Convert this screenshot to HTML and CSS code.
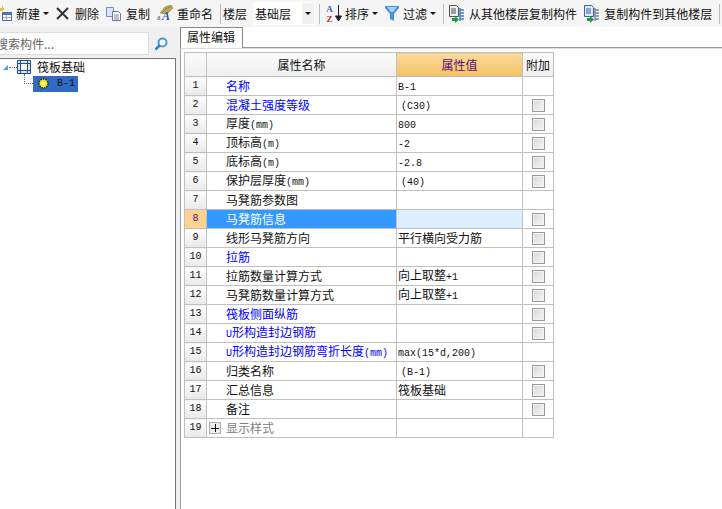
FILE: index.html
```html
<!DOCTYPE html>
<html>
  <head>
    <title>属性编辑</title>
    <link rel="stylesheet" href="styles.css">
  </head>
  <body>
    <div class="toolbar">
      <svg class="ic ic_new" width="12" height="16" viewBox="0 0 12 16">
        <path d="M0 2h2V0h1v2h1v2H3v1H0z" fill="#e8c040"/>
        <rect x="2.5" y="6.5" width="9" height="8" fill="#fff" stroke="#4a6fa8"/>
        <path d="M3 7h8v2H3z" fill="#4a7ac0"/>
        <path d="M3 11.500h8M6.500 9v5" stroke="#9ab"/>
      </svg>
      <span class="tb_text t_new">新建</span><i class="caret"></i>
      <svg class="ic ic_del" width="13" height="13" viewBox="0 0 13 13">
        <path d="M1 1l11 11M12 1L1 12" stroke="#333" stroke-width="2"/>
      </svg>
      <span class="tb_text t_del">删除</span>
      <svg class="ic ic_copy" width="16" height="14" viewBox="0 0 16 14">
        <path d="M.5.500h7v9h-7z" fill="#dce8f8" stroke="#6a8cc0"/>
        <path d="M6.500 4.500h6l2 2v7h-8z" fill="#fff" stroke="#6a7a90"/>
        <path d="M8 8h5M8 10h5M8 12h5" stroke="#7a8aa0"/>
      </svg>
      <span class="tb_text t_copy">复制</span>
      <svg class="ic ic_ren" width="16" height="18" viewBox="0 0 16 18">
        <path d="M3 8l5-6 6-2 2 3-6 6z" fill="#c8a850" stroke="#8a7a40" stroke-width=".6"/>
        <path d="M5 8l5-5 4-1" stroke="#5a9a50" fill="none"/>
        <text x="0" y="15" class="ren_a">a</text>
        <text x="5" y="15" class="ren_b">A</text>
      </svg>
      <span class="tb_text t_ren">重命名</span>
      <i class="sep sep_a"></i>
      <span class="tb_text t_floor">楼层</span>
      <div class="combo">
        <span class="tb_text">基础层</span>
        <div class="combo_btn"><i class="caret"></i></div>
      </div>
      <i class="sep sep_b"></i>
      <div class="ic_sort">
        <span class="az"><b class="az_a">A</b><b class="az_z">Z</b></span>
        <svg width="7" height="17" viewBox="0 0 7 17"><path d="M3.500 0v15M.5 11l3 5 3-5z" stroke="#222" fill="#222"/></svg>
      </div>
      <span class="tb_text t_sort">排序</span><i class="caret"></i>
      <svg class="ic ic_filter" width="14" height="15" viewBox="0 0 14 15">
        <path d="M0 0h14v2L9 8v7l-4-2V8L0 2z" fill="#4a90e0"/>
        <path d="M2 1h10L8 6H6z" fill="#a8d0f4"/>
      </svg>
      <span class="tb_text t_filter">过滤</span><i class="caret"></i>
      <i class="sep sep_c"></i>
      <svg class="ic ic_floor" width="16" height="18" viewBox="0 0 16 18">
        <path d="M.5.500h7l2 2v9h-9z" fill="#eee" stroke="#555"/>
        <path d="M2 4h5M2 6h5M2 8h5" stroke="#555"/>
        <path d="M3 13h3v-2l4 3.500-4 3.500v-2H3z" fill="#1f9a3a"/>
        <path d="M11 5h4M11 8h4M11 11h4M11 14h4M11 3v13" stroke="#3f7cc8" stroke-width="1.500"/>
      </svg>
      <span class="tb_text t_long">从其他楼层复制构件</span>
      <svg class="ic ic_floor2" width="16" height="18" viewBox="0 0 16 18">
        <path d="M.5.500h7l2 2v9h-9z" fill="#dfe8f4" stroke="#3a62a0"/>
        <path d="M2 4h5M2 6h5M2 8h5" stroke="#3a62a0"/>
        <path d="M3 13h3v-2l4 3.500-4 3.500v-2H3z" fill="#1f9a3a"/>
        <path d="M11 5h4M11 8h4M11 11h4M11 14h4M11 3v13" stroke="#7a8796" stroke-width="1.500"/>
      </svg>
      <span class="tb_text t_long">复制构件到其他楼层</span>
      <i class="sep sep_d"></i>
    </div>

    <div class="main">
      <div class="side">
        <div class="search_row">
          <div class="search_box"><span class="search_text">搜索构件...</span></div>
          <svg class="search_ic" width="14" height="14" viewBox="0 0 14 14">
            <circle cx="8.500" cy="5.500" r="4" fill="#fff" stroke="#4a9ad8" stroke-width="2"/>
            <path d="M5.500 8.500L1.500 12.500" stroke="#2f80c8" stroke-width="2.500"/>
          </svg>
        </div>
        <div class="tree">
          <div class="node">
            <i class="tri"></i><i class="dots"></i>
            <svg class="node_ic" width="14" height="14" viewBox="0 0 14 14">
              <path d="M.5.500h13v13H.5z" fill="#dbe6f4" stroke="#1f4f90"/>
              <path d="M3.500 .5v13M10.500 .5v13M.5 3.500h13M.5 10.500h13" stroke="#1f4f90"/>
              <path d="M4 4h6v6H4z" fill="#fff"/>
            </svg>
            <span>筏板基础</span>
          </div>
          <div class="node child">
            <i class="elbow"></i>
            <div class="sel">
              <svg width="11" height="11" viewBox="0 0 11 11">
                <circle cx="5.500" cy="5.500" r="4.500" fill="#f8f020" stroke="#222" stroke-width="1.500" stroke-dasharray="1.500 1"/>
                <circle cx="5.500" cy="5.500" r="1.500" fill="#fff"/>
              </svg>
              <span class="en sel_text">B-1</span>
            </div>
          </div>
        </div>
      </div>

      <div class="content">
        <div class="tabs"><div class="tab">属性编辑</div></div>
        <div class="pane">
          <table class="props">
            <colgroup><col class="c_no"><col class="c_name"><col class="c_val"><col class="c_add"></colgroup>
            <tr class="head">
              <th></th><th>属性名称</th><th class="val_head">属性值</th><th>附加</th>
            </tr>
            <tr><td class="no">1</td><td class="name link">名称</td><td class="val"><span class="en">B-1</span></td><td></td></tr>
            <tr><td class="no">2</td><td class="name link">混凝土强度等级</td><td class="val"><span class="en pad">(C30)</span></td><td class="add"><i class="chk"></i></td></tr>
            <tr><td class="no">3</td><td class="name">厚度<span class="en">(mm)</span></td><td class="val"><span class="en">800</span></td><td class="add"><i class="chk"></i></td></tr>
            <tr><td class="no">4</td><td class="name">顶标高<span class="en">(m)</span></td><td class="val"><span class="en">-2</span></td><td class="add"><i class="chk"></i></td></tr>
            <tr><td class="no">5</td><td class="name">底标高<span class="en">(m)</span></td><td class="val"><span class="en">-2.8</span></td><td class="add"><i class="chk"></i></td></tr>
            <tr><td class="no">6</td><td class="name">保护层厚度<span class="en">(mm)</span></td><td class="val"><span class="en pad">(40)</span></td><td class="add"><i class="chk"></i></td></tr>
            <tr><td class="no">7</td><td class="name">马凳筋参数图</td><td class="val"></td><td></td></tr>
            <tr class="current"><td class="no">8</td><td class="name">马凳筋信息</td><td class="val"></td><td class="add"><i class="chk"></i></td></tr>
            <tr><td class="no">9</td><td class="name">线形马凳筋方向</td><td class="val">平行横向受力筋</td><td class="add"><i class="chk"></i></td></tr>
            <tr><td class="no">10</td><td class="name link">拉筋</td><td class="val"></td><td class="add"><i class="chk"></i></td></tr>
            <tr><td class="no">11</td><td class="name">拉筋数量计算方式</td><td class="val">向上取整<span class="en">+1</span></td><td class="add"><i class="chk"></i></td></tr>
            <tr><td class="no">12</td><td class="name">马凳筋数量计算方式</td><td class="val">向上取整<span class="en">+1</span></td><td class="add"><i class="chk"></i></td></tr>
            <tr><td class="no">13</td><td class="name link">筏板侧面纵筋</td><td class="val"></td><td class="add"><i class="chk"></i></td></tr>
            <tr><td class="no">14</td><td class="name link"><span class="en">U</span>形构造封边钢筋</td><td class="val"></td><td class="add"><i class="chk"></i></td></tr>
            <tr><td class="no">15</td><td class="name link"><span class="en">U</span>形构造封边钢筋弯折长度<span class="en">(mm)</span></td><td class="val"><span class="en">max(15*d,200)</span></td><td></td></tr>
            <tr><td class="no">16</td><td class="name">归类名称</td><td class="val"><span class="en pad">(B-1)</span></td><td class="add"><i class="chk"></i></td></tr>
            <tr><td class="no">17</td><td class="name">汇总信息</td><td class="val">筏板基础</td><td class="add"><i class="chk"></i></td></tr>
            <tr><td class="no">18</td><td class="name">备注</td><td class="val"></td><td class="add"><i class="chk"></i></td></tr>
            <tr><td class="no">19</td><td class="name muted"><span class="plus"></span>显示样式</td><td class="val"></td><td></td></tr>
          </table>
        </div>
      </div>
    </div>
  </body>
</html>
```

FILE: styles.css
```css
* {
  margin: 0px;
  padding: 0px;
  box-sizing: border-box;
}
html,
body {
  height: 509px;
  overflow: hidden;
}
body {
  background: white;
  color: #111;
  font-family: "Noto Sans CJK SC", sans-serif;
  font-size: 12px;
  line-height: 16px;
}
.en {
  font-family: "Liberation Mono", monospace;
  font-size: 10px;
}
.pad {
  padding-left: 3px;
}

/* toolbar */
.toolbar {
  height: 27px;
  background: #f5f5f5;
  display: flex;
  align-items: center;
  overflow: hidden;
}
.ic {
  flex: none;
}
.ren_a {
  font-family: "Liberation Serif", serif;
  font-size: 8px;
  fill: #555;
}
.ren_b {
  font-family: "Liberation Serif", serif;
  font-size: 12px;
  font-weight: bold;
  font-style: italic;
  fill: #2a5aa8;
}
.tb_text {
  white-space: nowrap;
}
.caret {
  flex: none;
  width: 0;
  height: 0;
  margin-left: 3px;
  border-left: 3px solid transparent;
  border-right: 3px solid transparent;
  border-top: 3px solid #111;
}
.sep {
  flex: none;
  width: 1px;
  height: 20px;
  background: #bbb;
}
.t_new {
  margin-left: 4px;
}
.ic_del {
  margin-left: 7px;
}
.t_del {
  margin-left: 6px;
}
.ic_copy {
  margin-left: 7px;
}
.t_copy {
  margin-left: 4px;
}
.ic_ren {
  margin-left: 7px;
}
.t_ren {
  margin-left: 4px;
}
.sep_a {
  margin-left: 7px;
}
.t_floor {
  margin-left: 2px;
}
.combo {
  width: 62px;
  height: 23px;
  margin-left: 6px;
  padding-left: 2px;
  background: white;
  display: flex;
  align-items: center;
  justify-content: space-between;
}
.combo_btn {
  width: 12px;
  height: 21px;
  margin-right: 1px;
  background: #f0f0f0;
  display: flex;
  align-items: center;
  justify-content: center;
}
.combo_btn .caret {
  margin-left: 0;
}
.sep_b {
  margin-left: 4px;
}
.ic_sort {
  flex: none;
  width: 17px;
  margin-left: 5px;
  display: flex;
  align-items: center;
  gap: 1px;
}
.az {
  width: 9px;
  display: flex;
  flex-direction: column;
  font-family: "Liberation Serif", serif;
  font-size: 9px;
  line-height: 10px;
  text-align: center;
}
.az_a {
  color: #2a62b8;
}
.az_z {
  color: #a83a3a;
}
.t_sort {
  margin-left: 3px;
}
.ic_filter {
  margin-left: 7px;
}
.t_filter {
  margin-left: 4px;
}
.sep_c {
  margin-left: 7px;
}
.ic_floor {
  margin-left: 5px;
}
.t_long {
  margin-left: 4px;
}
.ic_floor2 {
  margin-left: 7px;
}
.sep_d {
  margin-left: 7px;
}

/* left side */
.main {
  display: flex;
  height: 482px;
}
.side {
  flex: none;
  width: 180px;
  padding-right: 4px;
  background: #f0f0f0;
  display: flex;
  flex-direction: column;
}
.search_row {
  height: 31px;
  padding-top: 5px;
  display: flex;
  align-items: flex-start;
}
.search_box {
  width: 149px;
  height: 23px;
  background: white;
  border: 1px solid #ddd;
  border-left: 0;
  overflow: hidden;
}
.search_text {
  display: block;
  margin-left: -4px;
  line-height: 21px;
  color: #666;
}
.search_ic {
  margin: 5px 0 0 5px;
}
.tree {
  flex: 1;
  background: white;
  border-top: 1px solid #777;
  border-right: 1px solid #777;
}
.node {
  height: 16px;
  display: flex;
  align-items: center;
  white-space: nowrap;
}
.tri {
  width: 0;
  height: 0;
  margin-left: 3px;
  border-left: 5px solid transparent;
  border-bottom: 5px solid #4aa0e8;
}
.dots {
  width: 8px;
  margin-left: 1px;
  border-top: 1px dotted #666;
}
.node_ic {
  margin-right: 6px;
}
.child {
  height: 17px;
}
.elbow {
  width: 9px;
  height: 10px;
  margin: -10px 0 0 24px;
  border-left: 1px dotted #666;
  border-bottom: 1px dotted #666;
}
.sel {
  width: 45px;
  height: 16px;
  background: #316ac5;
  padding-left: 5px;
  display: flex;
  align-items: center;
}
.sel_text {
  margin-left: 8px;
}

/* right side */
.content {
  flex: 1;
  min-width: 0;
}
.tabs {
  height: 21px;
  display: flex;
  border-bottom: 1px solid #999;
}
.tab {
  width: 63px;
  height: 21px;
  background: white;
  border: 1px solid #888;
  border-bottom: 0;
  padding: 1px 0 0 6px;
}
.pane {
  height: 461px;
  border-left: 1px solid #a0a0a0;
  border-top: 1px solid #ddd;
  padding: 3px 0 0 3px;
}
.props {
  border-collapse: collapse;
  table-layout: fixed;
  width: 369px;
}
.c_no {
  width: 22px;
}
.c_name {
  width: 190px;
}
.c_val {
  width: 126px;
}
.c_add {
  width: 31px;
}
.props th,
.props td {
  height: 19px;
  border: 1px solid #c0c0c0;
  font-weight: normal;
  line-height: 14px;
  white-space: nowrap;
  overflow: hidden;
}
.props .head th {
  height: 24px;
  background: linear-gradient(#fbfbfb, #efefef);
}
.props .head .val_head {
  background: linear-gradient(#fadb9e, #f3c163);
  color: #660a78;
}
.props .no {
  text-align: center;
  background: linear-gradient(#fdfdfd, #e9e9e9);
  font-family: "Liberation Mono", monospace;
  font-size: 10px;
}
.name {
  padding-left: 19px;
}
.link {
  color: #0000ff;
}
.muted {
  color: #808080;
  position: relative;
}
.val {
  padding-left: 1px;
}
.add {
  text-align: center;
}
.chk {
  display: block;
  width: 13px;
  height: 13px;
  margin: 0 auto;
  border: 1px solid #9a9a9a;
  background: linear-gradient(135deg, #d8d8d8, #f6f6f6);
  box-shadow: inset 0 0 0 1px #f2f2f2;
}
.plus {
  position: absolute;
  left: 2px;
  top: 3px;
  width: 12px;
  height: 12px;
  border: 1px solid #aaa;
  background:
    linear-gradient(#111, #111) center / 8px 1px no-repeat,
    linear-gradient(#111, #111) center / 1px 8px no-repeat,
    #eee;
}
.current .no {
  background: #ffd28f !important;
  color: #660a78;
}
.current .name {
  background: #3399ff;
  color: white;
}
.current .val {
  background: #ddeeff;
}
```
